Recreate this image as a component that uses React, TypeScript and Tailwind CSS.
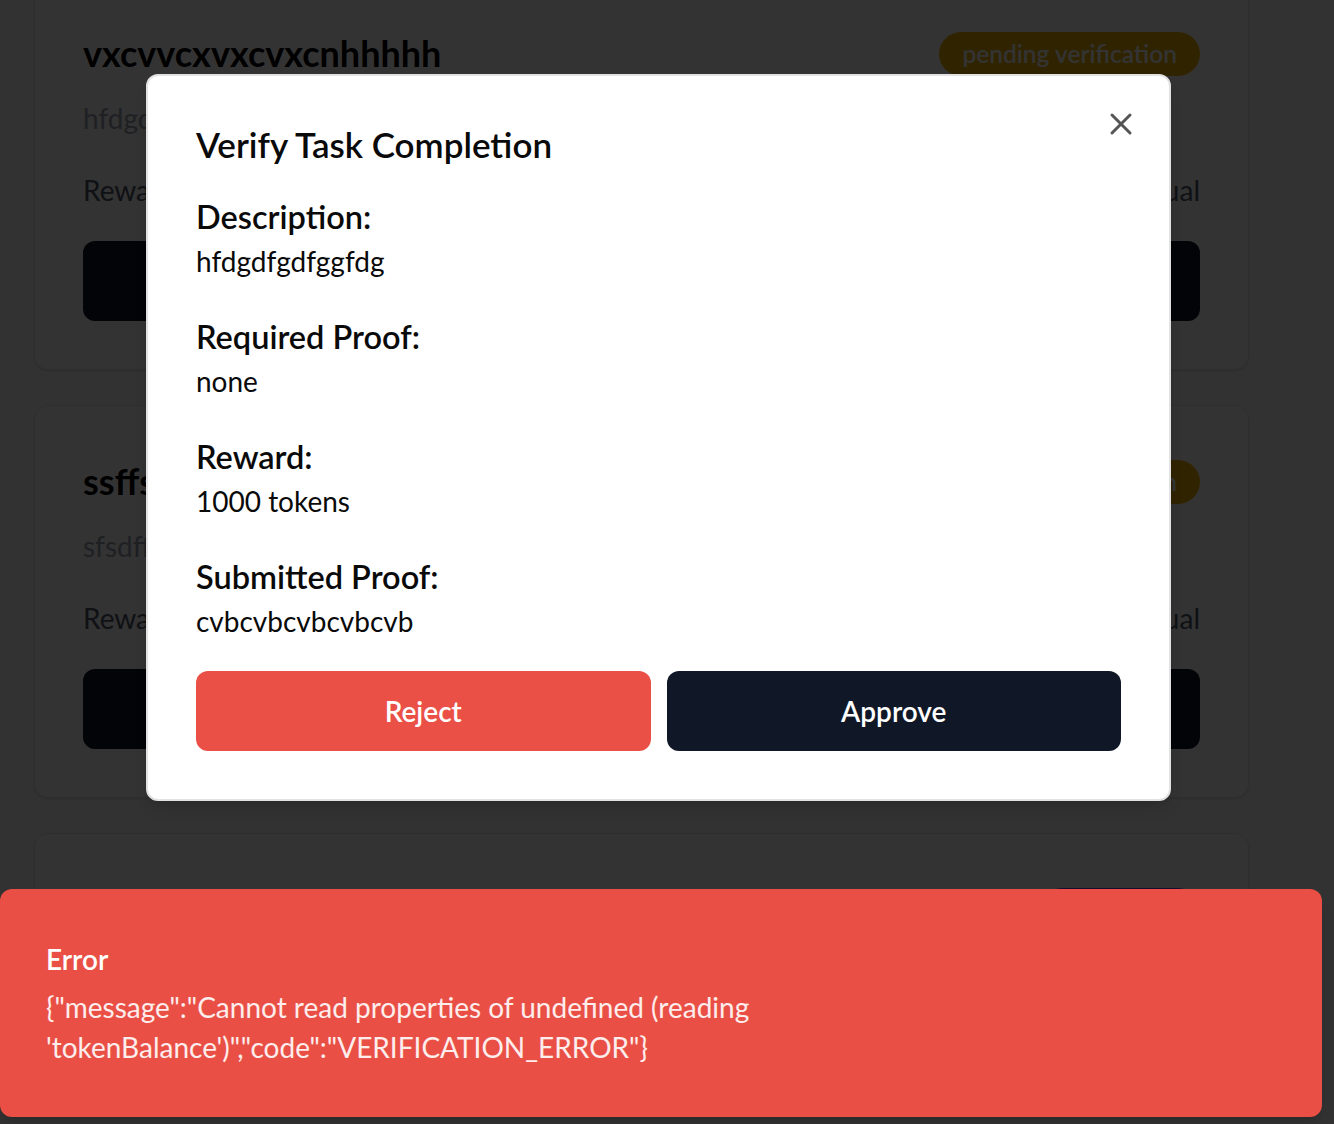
import React from 'react'
import { X } from 'lucide-react'

type Task = {
  title: string
  description: string
  status: string
  badge: string
  action: boolean
}

const tasks: Task[] = [
  { title: 'vxcvvcxvxcvxcnhhhhh', description: 'hfdgdfgdfggfdg', status: 'pending verification', badge: 'bg-yellow-500', action: true },
  { title: 'ssffsdfsdfsdf', description: 'sfsdffsdfsdf', status: 'pending verification', badge: 'bg-yellow-500', action: true },
  { title: 'fsdfsdfsdf', description: 'sdfsdfsdf', status: 'completed', badge: 'bg-[#7c3aed]', action: false },
]

const TaskCard = ({ task }: { task: Task }) => {
  return (
    <div className="w-[1215px] shrink-0 rounded-[14px] border border-gray-200 bg-white p-[48px] shadow-sm">
      <div className="flex h-[55px] items-center justify-between">
        <h3 className="text-[36px] font-bold leading-[55px] text-black">{task.title}</h3>
        <span className={`h-[44px] rounded-full px-[23px] text-[24.5px] font-semibold leading-[44px] text-white ${task.badge}`}>
          {task.status}
        </span>
      </div>
      {task.action && (
        <>
          <p className="mt-[19px] text-[28px] leading-[36px] text-gray-400">{task.description}</p>
          <div className="mt-[36px] flex justify-between text-[28px] leading-[36px] text-gray-600">
            <span>Reward: 1000 tokens</span>
            <span>Verification: manual</span>
          </div>
          <button className="mt-[33px] h-[80px] w-full rounded-[12px] bg-gray-900 text-[28px] font-semibold text-white">
            Verify Completion
          </button>
        </>
      )}
    </div>
  )
}

const Field = ({ label, value }: { label: string; value: string }) => {
  return (
    <div>
      <h4 className="text-[32.5px] font-semibold leading-[46px] text-[#0a0a0a]">{label}</h4>
      <p className="text-[28px] leading-[42px] text-[#0a0a0a]">{value}</p>
    </div>
  )
}

const App = () => {
  return (
    <div
      className="relative h-[1124px] w-[1334px] overflow-hidden bg-gray-50"
      style={{ fontFamily: 'Lato, "Open Sans", sans-serif' }}
    >
      {/* page underneath */}
      <div className="-mt-[23px] flex flex-col gap-[35px] pl-[34px]">
        {tasks.map((t) => (
          <TaskCard key={t.title} task={t} />
        ))}
      </div>

      {/* dim overlay */}
      <div className="absolute inset-0 bg-black/80" />

      {/* dialog */}
      <div className="absolute left-[146px] top-[74px] w-[1025px] rounded-[12px] border-2 border-[#e2e2e2] bg-white px-[48px] pb-[48px] pt-[48px] shadow-lg">
        <button className="absolute right-[30px] top-[30px] text-[#555]">
          <X size={36} strokeWidth={2} />
        </button>
        <h2 className="mb-[30px] text-[35px] font-semibold leading-[40px] text-[#0a0a0a]">Verify Task Completion</h2>
        <div className="flex flex-col gap-[32px]">
          <Field label="Description:" value="hfdgdfgdfggfdg" />
          <Field label="Required Proof:" value="none" />
          <Field label="Reward:" value="1000 tokens" />
          <Field label="Submitted Proof:" value="cvbcvbcvbcvbcvb" />
        </div>
        <div className="mt-[29px] flex gap-[16px]">
          <button className="h-[80px] flex-1 rounded-[12px] bg-[#ea5046] text-[28px] font-semibold text-white">Reject</button>
          <button className="h-[80px] flex-1 rounded-[12px] bg-gray-900 text-[28px] font-semibold text-white">Approve</button>
        </div>
      </div>

      {/* error toast */}
      <div className="absolute left-0 top-[889px] h-[228px] w-[1322px] rounded-[12px] bg-[#e94f45] pl-[46px] pt-[52px] shadow-lg">
        <div className="text-[28px] font-semibold leading-[36px] text-white">Error</div>
        <div className="mt-[10px] max-w-[860px] text-[28px] leading-[40px] text-white/90">
          {'{"message":"Cannot read properties of undefined (reading \'tokenBalance\')","code":"VERIFICATION_ERROR"}'}
        </div>
      </div>
    </div>
  )
}

export default App
